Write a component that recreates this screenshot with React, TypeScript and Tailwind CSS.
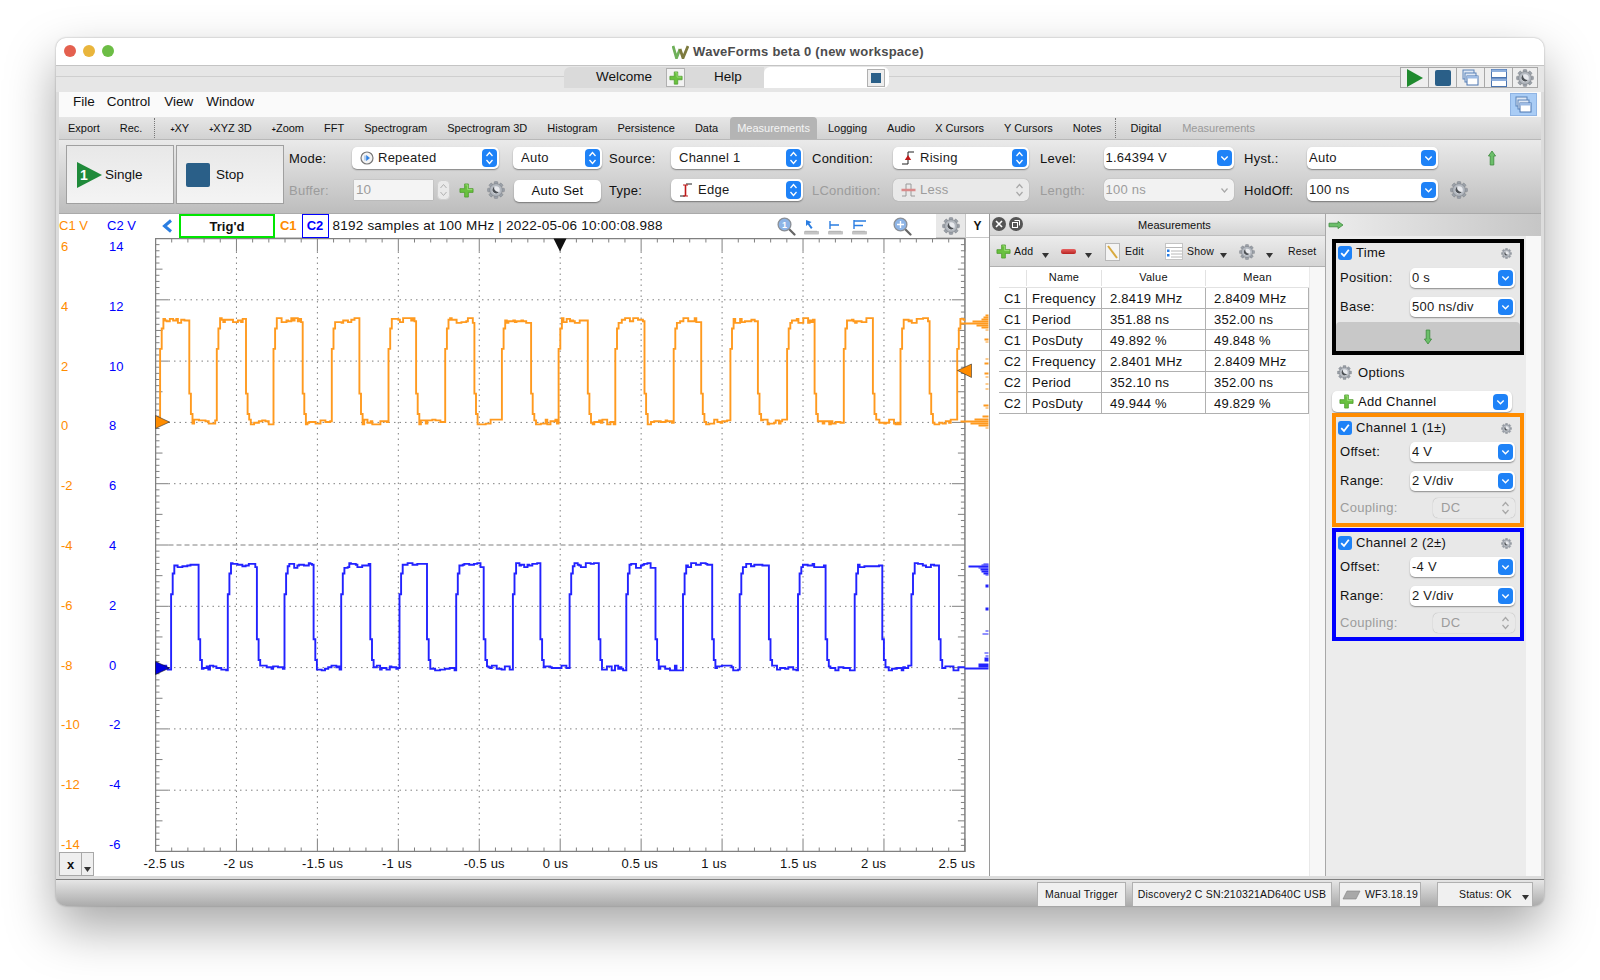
import type { ReactNode } from 'react'

const DIV_W = 80.94
const DIV_H = 61.3
const PLOT_W = 809.4
const PLOT_H = 613

function buildTrace(seed: number, firstEdge: number, hi: number, lo: number, startX: number) {
  let s = seed
  const rnd = () => {
    s = (s * 1664525 + 1013904223) % 4294967296
    return s / 4294967296
  }
  const period = 56.95
  const step = 1.62
  let y = lo
  let noise = 0
  let hold = 0
  let d = `M${startX} ${lo}`
  for (let x = startX; x < PLOT_W - 1; x += step) {
    const phase = ((x - firstEdge) % period + period) % period
    const target = x >= firstEdge - 28.4 && phase < period / 2 ? hi : lo
    y += (target - y) * 0.72
    if (hold <= 0) {
      noise = Math.round((rnd() - 0.5) * 7) * 0.8
      hold = Math.floor(rnd() * 3) + 1
    }
    hold--
    const settled = Math.abs(target - y) < 3
    const py = settled ? target + noise : y
    d += `H${(x + step).toFixed(1)}V${py.toFixed(1)}`
  }
  return d
}

const orangeTrace = buildTrace(17, 2.5, 82, 183.5, 3)
const blueTrace = buildTrace(91, 13, 327, 429.5, 1)

const orangeHist: [number, number, number][] = [
  [314, 3, 2], [316, 5, 2], [318, 7, 2], [320, 16, 2], [322, 28, 2], [324, 12, 2], [326, 7, 2], [329, 3, 1],
  [338, 4, 2], [341, 3, 1], [358, 3, 1], [362, 4, 2], [372, 4, 2], [376, 3, 1], [383, 3, 1], [388, 3, 1],
  [404, 5, 2], [407, 3, 1], [415, 6, 2], [418, 14, 2], [420, 28, 2], [422, 18, 2], [424, 10, 2], [427, 3, 1],
]
const blueHist: [number, number, number][] = [
  [563, 5, 1], [564, 7, 1], [565, 20, 2], [567, 10, 1], [568, 8, 2], [570, 7, 2], [572, 5, 2], [574, 3, 1],
  [584, 3, 3], [607, 3, 3], [630, 3, 1], [633, 6, 1], [652, 4, 1], [655, 3, 1], [657, 4, 4], [663, 10, 4], [667, 24, 2],
]

function Plot() {
  const vTicks: ReactNode[] = []
  for (let i = 0; i <= 50; i++) {
    const x = (i * DIV_W) / 5
    const len = i % 5 === 0 ? 13 : 4
    vTicks.push(<line key={`t${i}`} x1={x} x2={x} y1={0} y2={len} />)
    vTicks.push(<line key={`b${i}`} x1={x} x2={x} y1={PLOT_H} y2={PLOT_H - len} />)
  }
  const hTicks: ReactNode[] = []
  for (let i = 0; i <= 100; i++) {
    const y = (i * DIV_H) / 10
    const len = i % 10 === 0 ? 13 : i % 5 === 0 ? 7 : 4
    hTicks.push(<line key={`l${i}`} y1={y} y2={y} x1={0} x2={len} />)
    hTicks.push(<line key={`r${i}`} y1={y} y2={y} x1={PLOT_W} x2={PLOT_W - len} />)
  }
  return (
    <svg width="834" height="614" viewBox="-0.5 -0.5 834 614" className="block shrink-0">
      <g stroke="#808080" strokeWidth="1" fill="none">
        {Array.from({ length: 9 }, (_, i) => (
          <line key={i} x1={(i + 1) * DIV_W} x2={(i + 1) * DIV_W} y1={13} y2={PLOT_H - 13} strokeDasharray="1.5 4" />
        ))}
        {Array.from({ length: 9 }, (_, i) => (
          <line key={i} y1={(i + 1) * DIV_H} y2={(i + 1) * DIV_H} x1={13} x2={PLOT_W - 13} strokeDasharray={i === 4 ? '5 3' : '1.5 4'} />
        ))}
        {vTicks}
        {hTicks}
        <rect x="0" y="0" width={PLOT_W} height={PLOT_H} strokeWidth="1.5" />
      </g>
      <path d={orangeTrace} fill="none" stroke="#ff9a1f" strokeWidth="1.9" />
      <path d={blueTrace} fill="none" stroke="#2222ff" strokeWidth="1.9" />
      {orangeHist.map(([y, w, h]) => (
        <rect key={y} x={833 - w} y={y - 238} width={w} height={h} fill="#ff9a1f" />
      ))}
      {blueHist.map(([y, w, h]) => (
        <rect key={y} x={833 - w} y={y - 238} width={w} height={h} fill="#2222ff" />
      ))}
      <polygon points="0,177 14,183.5 0,190" fill="#ff8c00" stroke="#333" strokeWidth="0.6" />
      <polygon points="0,423 14,429.5 0,436" fill="#0000e0" stroke="#111" strokeWidth="0.6" />
      <polygon points="802,132 816,125.5 816,139" fill="#ff8c00" stroke="#333" strokeWidth="0.6" />
      <polygon points="398,0 411,0 404.5,13" fill="#111" />
    </svg>
  )
}

function Gear({ size = 16 }: { size?: number }) {
  return (
    <svg width={size} height={size} viewBox="0 0 20 20" className="shrink-0">
      <g fill="#9aa0a8" stroke="#6f747b" strokeWidth="0.4">
        {[0, 45, 90, 135, 180, 225, 270, 315].map(a => (
          <rect key={a} x="8" y="0.6" width="4" height="5" rx="0.8" transform={`rotate(${a} 10 10)`} />
        ))}
      </g>
      <circle cx="10" cy="10" r="7" fill="#b4b9c0" stroke="#7c8188" strokeWidth="0.7" />
      <circle cx="10" cy="10" r="4.2" fill="#e8eaee" />
      <path d="M8 6.4a4 4 0 1 0 5.4 5.6a4.6 4.6 0 0 1-5.4-5.6z" fill="#4d5156" />
    </svg>
  )
}

function Plus({ size = 15 }: { size?: number }) {
  return (
    <svg width={size} height={size} viewBox="0 0 16 16" className="shrink-0">
      <path d="M6 1h4v5h5v4h-5v5H6v-5H1V6h5z" fill="#69c13f" stroke="#4a9a2a" strokeWidth="0.8" strokeLinejoin="round" />
      <path d="M6.8 2h2.4v5h5" fill="none" stroke="#a5e584" strokeWidth="0.8" />
    </svg>
  )
}

function Arrow({ dir }: { dir: 'up' | 'down' | 'right' }) {
  const rot = dir === 'up' ? 0 : dir === 'down' ? 180 : 90
  return (
    <svg width="16" height="16" viewBox="0 0 16 16" className="shrink-0">
      <path
        d="M8 1l3.6 5H9.8v9H6.2V6H4.4z"
        transform={`rotate(${rot} 8 8)`}
        fill="#6cbf6a"
        stroke="#3c8a3c"
        strokeWidth="0.8"
        strokeLinejoin="round"
      />
    </svg>
  )
}

function DropTri() {
  return (
    <svg width="7" height="5" viewBox="0 0 7 5" className="shrink-0">
      <polygon points="0,0 7,0 3.5,5" fill="#333" />
    </svg>
  )
}

function WaveIcon({ kind, muted }: { kind: 'edge' | 'rising' | 'less'; muted?: boolean }) {
  const dark = muted ? '#9a9a9a' : '#222'
  const red = muted ? '#d98a8a' : '#c01818'
  return (
    <svg width="15" height="16" viewBox="0 0 15 16" className="shrink-0">
      {kind === 'edge' && (
        <>
          <path d="M1 14h5M7 2h6" stroke={dark} strokeWidth="1" fill="none" />
          <path d="M6.5 3v11" stroke={red} strokeWidth="1.6" />
          <path d="M4 3h5M4 14h5" stroke={red} strokeWidth="1" />
        </>
      )}
      {kind === 'rising' && (
        <>
          <path d="M1 14h6V2h6" stroke={dark} strokeWidth="1" fill="none" />
          <polygon points="7,5 3.8,10 10.2,10" fill={red} />
        </>
      )}
      {kind === 'less' && (
        <>
          <path d="M1 14h4V2h5v12h4" stroke={dark} strokeWidth="1" fill="none" />
          <path d="M0.5 8h14" stroke={red} strokeWidth="2.4" />
        </>
      )}
    </svg>
  )
}

function Field({
  w,
  arrows = 'updown',
  disabled,
  icon,
  children,
}: {
  w: string
  arrows?: 'updown' | 'down'
  disabled?: boolean
  icon?: ReactNode
  children: ReactNode
}) {
  const disabledBg = arrows === 'down' ? 'bg-[#f2f2f2]' : 'bg-[#e9e9e9]'
  return (
    <div
      className={`${w} h-full flex items-center rounded-[5px] pr-[2px] text-[13px] tracking-[0.25px] ${arrows === 'down' ? 'pl-[2px]' : 'pl-[8px]'} ${
        disabled
          ? `${disabledBg} text-[#9c9c9c] shadow-[0_0_1px_rgba(0,0,0,0.35)]`
          : 'bg-white text-[#1a1a1a] shadow-[0_1px_1.5px_rgba(0,0,0,0.4)]'
      }`}
    >
      {icon && <span className="mr-[4px] flex shrink-0">{icon}</span>}
      <span className="flex-1 truncate">{children}</span>
      {disabled ? (
        <svg width="15" height="18" viewBox="0 0 15 18" className="shrink-0">
          {arrows === 'updown' ? (
            <path d="M4.5 7L7.5 3.5L10.5 7M4.5 11L7.5 14.5L10.5 11" fill="none" stroke="#a8a8a8" strokeWidth="1.2" />
          ) : (
            <path d="M4.5 7.5L7.5 11L10.5 7.5" fill="none" stroke="#a8a8a8" strokeWidth="1.2" />
          )}
        </svg>
      ) : arrows === 'updown' ? (
        <span className="flex h-[18px] w-[15px] shrink-0 items-center justify-center rounded-[4px] bg-[#1e82f7]">
          <svg width="15" height="18" viewBox="0 0 15 18">
            <path d="M4.5 7L7.5 3.5L10.5 7M4.5 11L7.5 14.5L10.5 11" fill="none" stroke="#fff" strokeWidth="1.3" />
          </svg>
        </span>
      ) : (
        <span className="flex h-[16px] w-[15px] shrink-0 items-center justify-center rounded-[4px] bg-[#1e82f7]">
          <svg width="15" height="16" viewBox="0 0 15 16">
            <path d="M4.3 6.5L7.5 9.7L10.7 6.5" fill="none" stroke="#fff" strokeWidth="1.4" />
          </svg>
        </span>
      )}
    </div>
  )
}

function Label({ children, muted }: { children: ReactNode; muted?: boolean }) {
  return (
    <div className={`flex h-full items-center pt-px text-[13px] tracking-[0.25px] ${muted ? 'text-[#9c9c9c]' : 'text-[#111]'}`}>
      {children}
    </div>
  )
}

function Check({ label }: { label: string }) {
  return (
    <div className="flex h-[14px] items-center pl-[2px] pr-[8px]">
      <span className="flex h-[14px] w-[14px] items-center justify-center rounded-[3px] bg-[#1e82f7]">
        <svg width="12" height="12" viewBox="0 0 12 12">
          <path d="M2.2 6.2L5 9L9.8 2.8" fill="none" stroke="#fff" strokeWidth="1.8" />
        </svg>
      </span>
      <span className="ml-[4px] flex-1 text-[13px] tracking-[0.3px] text-[#111]">{label}</span>
      <Gear size={11} />
    </div>
  )
}

function SideRow({ label, value }: { label: string; value: string }) {
  return (
    <div className="flex h-[20px] items-center pl-[4px]">
      <span className="w-[70px] text-[13px] tracking-[0.3px] text-[#111]">{label}</span>
      <Field w="w-[105px]" arrows="down">
        {value}
      </Field>
    </div>
  )
}

function ChannelBox({ border, name, offset, className }: { border: string; name: string; offset: string; className: string }) {
  return (
    <div className={`ml-[6px] w-[192px] border-4 ${border} bg-[#e8e8e8] pt-[4px] ${className}`}>
      <Check label={name} />
      <div className="mt-[7px]">
        <SideRow label="Offset:" value={offset} />
      </div>
      <div className="mt-[9px]">
        <SideRow label="Range:" value="2 V/div" />
      </div>
      <div className="mt-[7px] flex h-[20px] items-center pl-[4px]">
        <span className="w-[93px] text-[13px] tracking-[0.3px] text-[#9c9c9c]">Coupling:</span>
        <Field w="w-[82px]" disabled>
          DC
        </Field>
      </div>
    </div>
  )
}

function MeasureIcon({ kind }: { kind: 'arrow' | 'one' | 'two' }) {
  return (
    <svg width="17" height="17" viewBox="0 0 17 17" className="shrink-0">
      {kind === 'arrow' && <path d="M3 2v6l1.8-1.6L8 11l1.6-1.2L6.4 5.4L8.6 4z" fill="#2a7de1" />}
      {kind === 'one' && <path d="M3 3v8M3 7h9" stroke="#2a7de1" strokeWidth="1.4" fill="none" />}
      {kind === 'two' && <path d="M3 2v9M3 3h12M3 7.5h9" stroke="#2a7de1" strokeWidth="1.4" fill="none" />}
      <rect x="1" y="13" width="15" height="3.5" rx="0.8" fill="#c4c4c4" />
      <path d="M3 12.5v1.5M5 12.5v1.5M7 12.5v1.5M9 12.5v1.5M11 12.5v1.5M13 12.5v1.5" stroke="#999" strokeWidth="0.6" />
    </svg>
  )
}

function Magnifier({ center }: { center: ReactNode }) {
  return (
    <svg width="19" height="19" viewBox="0 0 19 19" className="shrink-0">
      <path d="M11.5 11.5L17.5 17.5" stroke="#666" strokeWidth="2.2" strokeLinecap="round" />
      <circle cx="7.5" cy="7.5" r="6.4" fill="#8db4e6" stroke="#8a8f96" strokeWidth="1.3" />
      {center}
    </svg>
  )
}

function WindowsIcon() {
  return (
    <svg width="17" height="17" viewBox="0 0 17 17">
      <rect x="1" y="1" width="11" height="9" fill="#dfe8f5" stroke="#5a82b8" />
      <rect x="3" y="4" width="11" height="9" fill="#dfe8f5" stroke="#5a82b8" />
      <rect x="5" y="7" width="11" height="9" fill="#fff" stroke="#4a74b0" />
      <rect x="5" y="7" width="11" height="2.5" fill="#9dbbe4" />
    </svg>
  )
}

const tabs = ['FFT', 'Spectrogram', 'Spectrogram 3D', 'Histogram', 'Persistence', 'Data']
const plusTabs = ['XY', 'XYZ 3D', 'Zoom']
const tabsAfter = ['Logging', 'Audio', 'X Cursors', 'Y Cursors', 'Notes']

const rows = [
  ['C1', 'Frequency', '2.8419 MHz', '2.8409 MHz'],
  ['C1', 'Period', '351.88 ns', '352.00 ns'],
  ['C1', 'PosDuty', '49.892 %', '49.848 %'],
  ['C2', 'Frequency', '2.8401 MHz', '2.8409 MHz'],
  ['C2', 'Period', '352.10 ns', '352.00 ns'],
  ['C2', 'PosDuty', '49.944 %', '49.829 %'],
]

const yOrange = ['6', '4', '2', '0', '-2', '-4', '-6', '-8', '-10', '-12', '-14']
const yBlue = ['14', '12', '10', '8', '6', '4', '2', '0', '-2', '-4', '-6']
const xLabels: [string, string][] = [
  ['-2.5 us', ''],
  ['-2 us', 'mr-[10px]'],
  ['-1.5 us', ''],
  ['-1 us', 'mr-[10px]'],
  ['-0.5 us', 'ml-[6px]'],
  ['0 us', 'mr-[10px]'],
  ['0.5 us', ''],
  ['1 us', 'mr-[10px]'],
  ['1.5 us', ''],
  ['2 us', 'mr-[8px]'],
  ['2.5 us', ''],
]

export default function App() {
  return (
    <div className="h-[980px] overflow-hidden bg-white pt-[38px] pl-[56px] font-['Liberation_Sans',Arial,sans-serif]">
      <div className="flex h-[868px] w-[1488px] flex-col overflow-hidden rounded-[10px] bg-[#dcdcdc] shadow-[0_22px_50px_rgba(0,0,0,0.35),0_0_2px_rgba(0,0,0,0.35)]">
        {/* Title bar */}
        <div className="relative flex h-[28px] shrink-0 items-center justify-center border-b border-[#c4c4c4] bg-white pr-[4px]">
          <div className="absolute left-[8px] top-[7px] flex gap-[7px]">
            <span className="h-[12px] w-[12px] rounded-full bg-[#e4604f]" />
            <span className="h-[12px] w-[12px] rounded-full bg-[#e9b53c]" />
            <span className="h-[12px] w-[12px] rounded-full bg-[#6cbd45]" />
          </div>
          <svg width="17" height="14" viewBox="0 0 17 14" className="mr-[4px] shrink-0">
            <path d="M1 1l3.5 12L8 4" fill="none" stroke="#6fb05a" strokeWidth="2.8" />
            <path d="M8 4l3 9L16 1" fill="none" stroke="#7d7a3e" strokeWidth="2.8" />
          </svg>
          <span className="text-[13px] font-bold tracking-[0.25px] text-[#4c4c4c]">WaveForms beta 0 (new workspace)</span>
        </div>

        {/* Workspace tabs */}
        <div className="flex h-[26px] shrink-0 bg-[#e6e6e6]">
          <div className="w-[508px] pt-[10px]">
            <div className="border-t border-[#cfcfcf]" />
          </div>
          <div className="mt-px flex h-[21px] w-[200px] items-center rounded-tl-[6px] bg-[#dadada] text-[13.5px] text-[#111]">
            <span className="ml-[32px]">Welcome</span>
            <span className="ml-[14px] flex h-[19px] w-[19px] items-center justify-center border border-[#b0b0b0] bg-[#f2f2f2]">
              <Plus size={14} />
            </span>
            <span className="ml-[29px]">Help</span>
          </div>
          <div className="mt-px flex h-[21px] w-[125px] items-center justify-end rounded-r-[6px] rounded-tl-[6px] bg-white pr-[4px]">
            <span className="flex h-[18px] w-[18px] items-center justify-center border border-[#b0b0b0] bg-[#eeeeee]">
              <span className="h-[10px] w-[10px] bg-[#2a5f88]" />
            </span>
          </div>
          <div className="flex-1 pt-[10px]">
            <div className="border-t border-[#cfcfcf]" />
          </div>
          <div className="mr-[6px] mt-px flex h-[21px] border border-[#a8a8a8] bg-[#eeeeee]">
            <span className="flex w-[28px] items-center justify-center border-r border-[#a8a8a8]">
              <svg width="18" height="18" viewBox="0 0 18 18">
                <polygon points="1,0 17,9 1,18" fill="#1f8a2e" />
              </svg>
            </span>
            <span className="flex w-[28px] items-center justify-center border-r border-[#a8a8a8]">
              <span className="h-[16px] w-[16px] rounded-[2px] bg-[#2a5f88]" />
            </span>
            <span className="flex w-[28px] items-center justify-center border-r border-[#a8a8a8]">
              <WindowsIcon />
            </span>
            <span className="flex w-[28px] items-center justify-center border-r border-[#a8a8a8]">
              <svg width="16" height="18" viewBox="0 0 16 18">
                <rect x="0.5" y="0.5" width="15" height="8" fill="#fff" stroke="#4a74b0" />
                <rect x="0.5" y="9.5" width="15" height="8" fill="#fff" stroke="#4a74b0" />
                <rect x="0.5" y="0.5" width="15" height="2.5" fill="#8fb0de" />
                <rect x="0.5" y="9.5" width="15" height="2.5" fill="#8fb0de" />
              </svg>
            </span>
            <span className="flex w-[24px] items-center justify-center">
              <Gear size={18} />
            </span>
          </div>
        </div>

        <div className="flex min-h-0 flex-1 flex-col px-[3px]">
          {/* Menu */}
          <div className="flex h-[25px] shrink-0 items-center bg-[#fafafa] pl-[14px] text-[13.5px] text-[#111]">
            <span className="mb-[4px] flex">
              <span>File</span>
              <span className="ml-[12px]">Control</span>
              <span className="ml-[14px]">View</span>
              <span className="ml-[13px]">Window</span>
            </span>
            <span className="ml-auto mr-[4px] flex h-[23px] w-[27px] items-center justify-center border border-[#8fb4e4] bg-[#a9ccf5]">
              <WindowsIcon />
            </span>
          </div>

          {/* Instrument tabs */}
          <div className="flex h-[23px] shrink-0 items-center border-b border-[#b8b8b8] bg-gradient-to-b from-[#e6e6e6] to-[#d2d2d2] text-[11px] text-[#111]">
            <span className="ml-[9px]">Export</span>
            <span className="ml-[20px]">Rec.</span>
            <span className="ml-[12px] h-[20px] border-l border-dotted border-[#777]" />
            <span className="ml-[5px] flex items-center">
              {plusTabs.map(t => (
                <span key={t} className="px-[10px]">
                  <span className="text-[7px] font-bold">+</span>
                  {t}
                </span>
              ))}
              {tabs.map(t => (
                <span key={t} className="px-[10px]">
                  {t}
                </span>
              ))}
            </span>
            <span className="ml-[2px] flex h-full items-center rounded-t-[4px] bg-[#b4b4b4] px-[7px] text-[#f4f4f4]">Measurements</span>
            <span className="ml-px flex">
              {tabsAfter.map(t => (
                <span key={t} className="px-[10px]">
                  {t}
                </span>
              ))}
            </span>
            <span className="ml-[3px] h-[20px] border-l border-dotted border-[#777]" />
            <span className="ml-[15px]">Digital</span>
            <span className="ml-[21px] text-[#9a9a9a]">Measurements</span>
          </div>

          {/* Trigger toolbar */}
          <div className="flex h-[74px] shrink-0 items-start border-b border-[#aaaaaa] bg-gradient-to-b from-[#eaeaea] to-[#bdbdbd] pl-[7px]">
            <div className="mt-[5px] flex h-[59px] w-[108px] items-center border border-[#a0a0a0] bg-gradient-to-b from-[#e8e8e8] to-[#f4f4f4] pl-[9px] pt-px text-[13.5px] text-[#111]">
              <svg width="27" height="26" viewBox="0 0 27 26" className="shrink-0">
                <polygon points="1,0 26,13 1,26" fill="#1f8a3a" />
                <text x="4" y="18" fontSize="14" fontWeight="700" fill="#fff" fontFamily="Liberation Sans">
                  1
                </text>
              </svg>
              <span className="ml-[2px]">Single</span>
            </div>
            <div className="ml-[2px] mt-[5px] flex h-[59px] w-[108px] items-center border border-[#a0a0a0] bg-gradient-to-b from-[#e8e8e8] to-[#f4f4f4] pl-[9px] pt-px text-[13.5px] text-[#111]">
              <span className="h-[24px] w-[24px] rounded-[2px] bg-[#2a5f88]" />
              <span className="ml-[6px]">Stop</span>
            </div>
            <div className="ml-[5px] mt-[7px] grid grid-cols-[63px_161px_96px_62px_141px_81px_147px_63.5px_140.5px_63px_131px_auto] grid-rows-[22px_22px] gap-y-[10px]">
              <Label>Mode:</Label>
              <Field
                w="w-[147px]"
                icon={
                  <svg width="14" height="14" viewBox="0 0 14 14">
                    <circle cx="7" cy="7" r="6" fill="#f4f4f4" stroke="#777" strokeWidth="1.2" />
                    <path d="M5 4.5v5M6.5 4.5l3 2.5l-3 2.5z" fill="#2a7de1" stroke="#2a7de1" strokeWidth="0.6" />
                  </svg>
                }
              >
                Repeated
              </Field>
              <Field w="w-[89px]">Auto</Field>
              <Label>Source:</Label>
              <Field w="w-[132px]">Channel 1</Field>
              <Label>Condition:</Label>
              <Field w="w-[136px]" icon={<WaveIcon kind="rising" />}>
                Rising
              </Field>
              <Label>Level:</Label>
              <Field w="w-[130px]" arrows="down">
                1.64394 V
              </Field>
              <Label>Hyst.:</Label>
              <Field w="w-[131px]" arrows="down">
                Auto
              </Field>
              <div className="ml-[46px] flex h-full items-center">
                <Arrow dir="up" />
              </div>

              <Label muted>Buffer:</Label>
              <div className="flex h-full items-center pl-[2px]">
                <span className="flex h-[20px] w-[79px] items-center bg-[#f4f4f4] pl-[2px] text-[13.5px] text-[#9c9c9c] shadow-[0_0_1px_rgba(0,0,0,0.3)]">
                  10
                </span>
                <svg width="13" height="20" viewBox="0 0 13 20" className="ml-[4px] shrink-0">
                  <rect x="0.5" y="0.5" width="12" height="19" rx="4" fill="#e9e9e9" stroke="#cfcfcf" />
                  <path d="M3.5 8L6.5 4.5L9.5 8M3.5 12L6.5 15.5L9.5 12" fill="none" stroke="#b0b0b0" />
                </svg>
                <span className="ml-[9px] flex">
                  <Plus size={15} />
                </span>
                <span className="ml-[13px] flex">
                  <Gear size={18} />
                </span>
              </div>
              <div className="ml-px flex h-full w-[87px] translate-y-px items-center justify-center rounded-[5px] bg-white text-[13px] tracking-[0.25px] text-[#111] shadow-[0_1px_1.5px_rgba(0,0,0,0.4)]">
                Auto Set
              </div>
              <Label>Type:</Label>
              <Field w="w-[132px]" icon={<WaveIcon kind="edge" />}>
                Edge
              </Field>
              <Label muted>LCondition:</Label>
              <Field w="w-[136px]" disabled icon={<WaveIcon kind="less" muted />}>
                Less
              </Field>
              <Label muted>Length:</Label>
              <Field w="w-[130px]" arrows="down" disabled>
                100 ns
              </Field>
              <Label>HoldOff:</Label>
              <Field w="w-[131px]" arrows="down">
                100 ns
              </Field>
              <div className="ml-[12px] flex h-full items-center">
                <Gear size={18} />
              </div>
            </div>
          </div>

          {/* Main area */}
          <div className="flex h-[662px] shrink-0">
            {/* Scope pane */}
            <div className="flex w-[931px] shrink-0 flex-col border-r border-[#9a9a9a] bg-white">
              <div className="flex h-[24px] shrink-0 items-center text-[13px]">
                <span className="w-[48px] text-[#ff8c00]">C1 V</span>
                <span className="w-[55px] text-[#0000ff]">C2 V</span>
                <span className="flex w-[17px]">
                  <svg width="11" height="14" viewBox="0 0 11 14">
                    <path d="M9 1.5L2.5 7L9 12.5" fill="none" stroke="#2a7de1" strokeWidth="3" />
                  </svg>
                </span>
                <span className="flex h-full w-[96px] items-center justify-center border-2 border-[#00e600] pt-px font-bold text-[#111]">
                  Trig'd
                </span>
                <span className="flex h-full w-[26.5px] items-center justify-center border-b border-[#c8c8c8] font-bold text-[#ff8c00]">C1</span>
                <span className="flex h-full w-[27px] items-center justify-center border border-[#0000ff] font-bold text-[#0000ff]">C2</span>
                <span className="ml-[4px] whitespace-nowrap pt-px text-[13.5px] tracking-[0.22px] text-[#111]">8192 samples at 100 MHz | 2022-05-06 10:00:08.988</span>
                <span className="ml-auto flex items-center">
                  <Magnifier center={<text x="5" y="11" fontSize="9" fontWeight="700" fill="#fff" fontFamily="Liberation Sans">1</text>} />
                  <span className="ml-[7px] flex">
                    <MeasureIcon kind="arrow" />
                  </span>
                  <span className="ml-[7px] flex">
                    <MeasureIcon kind="one" />
                  </span>
                  <span className="ml-[7px] flex">
                    <MeasureIcon kind="two" />
                  </span>
                  <span className="ml-[25px] flex">
                    <Magnifier center={<path d="M4 7.5h7M7.5 4v7" stroke="#fff" strokeWidth="1.4" />} />
                  </span>
                  <span className="ml-[24px] flex h-[24px] w-[29px] items-center justify-center border-b border-[#c8c8c8] bg-[#e8e8e8]">
                    <Gear size={18} />
                  </span>
                  <span className="flex h-[24px] w-[24px] items-center justify-center border-b border-l border-[#c8c8c8] text-[12px] font-bold text-[#111]">
                    Y
                  </span>
                </span>
              </div>

              <div className="flex h-[614px] shrink-0">
                <div className="flex h-full w-[48px] shrink-0 translate-y-px flex-col justify-between pl-[2px] text-[13px] text-[#ff8c00]">
                  {yOrange.map(v => (
                    <span key={v} className="h-[16px] leading-[16px]">
                      {v}
                    </span>
                  ))}
                </div>
                <div className="flex h-full w-[48px] shrink-0 translate-y-px flex-col justify-between pl-[2px] text-[13px] text-[#0000ff]">
                  {yBlue.map(v => (
                    <span key={v} className="h-[16px] leading-[16px]">
                      {v}
                    </span>
                  ))}
                </div>
                <Plot />
              </div>

              <div className="flex h-[24px] shrink-0 items-center">
                <div className="flex h-[24px] w-[35px] shrink-0 border border-[#a8a8a8] bg-[#efefef]">
                  <span className="flex w-[22px] items-center justify-center border-r border-[#a8a8a8] text-[13px] font-bold leading-none text-[#111]">x</span>
                  <span className="flex flex-1 items-end justify-center pb-[3px]">
                    <DropTri />
                  </span>
                </div>
                <div className="ml-[30.5px] grid w-[872px] shrink-0 grid-cols-11 text-center text-[13px] text-[#111]">
                  {xLabels.map(([l, shift]) => (
                    <span key={l} className={`whitespace-nowrap tracking-[0.2px] ${shift}`}>
                      {l}
                    </span>
                  ))}
                </div>
              </div>
            </div>

            {/* Measurements pane */}
            <div className="flex w-[336px] shrink-0 flex-col border-r border-[#a8a8a8] bg-white">
              <div className="relative flex h-[22px] shrink-0 items-center justify-center border-b border-[#bdbdbd] bg-gradient-to-b from-[#ececec] to-[#d4d4d4] pl-[34px] pt-px text-[11px] text-[#111]">
                <span className="absolute left-[2px] top-[3px] flex gap-[3px]">
                  <span className="flex h-[14px] w-[14px] items-center justify-center rounded-full bg-[#555]">
                    <svg width="8" height="8" viewBox="0 0 8 8">
                      <path d="M1 1l6 6M7 1l-6 6" stroke="#fff" strokeWidth="1.6" />
                    </svg>
                  </span>
                  <span className="flex h-[14px] w-[14px] items-center justify-center rounded-full bg-[#555]">
                    <svg width="8" height="8" viewBox="0 0 8 8">
                      <rect x="0.5" y="2.5" width="5" height="5" fill="none" stroke="#fff" />
                      <path d="M2.5 .5h5v5" fill="none" stroke="#fff" />
                    </svg>
                  </span>
                </span>
                Measurements
              </div>
              <div className="flex h-[31px] shrink-0 items-center border-b border-[#b0b0b0] bg-gradient-to-b from-[#ececec] to-[#d4d4d4] pt-px text-[10.5px] tracking-[0.2px] text-[#111]">
                <span className="ml-[6px] flex">
                  <Plus size={15} />
                </span>
                <span className="ml-[3px] w-[20px]">Add</span>
                <span className="ml-[8px] mt-[8px] flex">
                  <DropTri />
                </span>
                <span className="ml-[12px] h-[5px] w-[15px] rounded-[2px] bg-gradient-to-b from-[#e86060] to-[#b82020]" />
                <span className="ml-[9px] mt-[8px] flex">
                  <DropTri />
                </span>
                <svg width="15" height="18" viewBox="0 0 15 18" className="ml-[13px] shrink-0">
                  <rect x="0.5" y="0.5" width="14" height="17" fill="#f4f4f4" stroke="#b8b8b8" />
                  <path d="M3 3l9 12" stroke="#d8a93e" strokeWidth="2" />
                </svg>
                <span className="ml-[5px] w-[19px]">Edit</span>
                <svg width="18" height="17" viewBox="0 0 18 17" className="ml-[21px] shrink-0">
                  <rect x="0.5" y="0.5" width="17" height="16" fill="#fff" stroke="#c4c4c4" />
                  <path d="M0.5 4.5h17M6 8h11M6 11h11M6 14h11" stroke="#b8b8b8" />
                  <rect x="2" y="6.5" width="2.5" height="2.5" fill="#2a7de1" />
                  <rect x="2" y="11" width="2.5" height="2.5" fill="#2a7de1" />
                </svg>
                <span className="ml-[4px] w-[27px]">Show</span>
                <span className="ml-[6px] mt-[8px] flex">
                  <DropTri />
                </span>
                <span className="ml-[12px] flex">
                  <Gear size={16} />
                </span>
                <span className="ml-[11px] mt-[8px] flex">
                  <DropTri />
                </span>
                <span className="ml-[15px]">Reset</span>
              </div>
              <div className="flex min-h-0 flex-1">
                <div className="w-[319px] shrink-0 pl-[9px] text-[13px] tracking-[0.25px] text-[#111]">
                  <div className="flex h-[21px] items-center border-b border-[#e2e2e2] pt-px text-[11px]">
                    <span className="h-[16px] w-[28px] border-r border-[#e2e2e2]" />
                    <span className="flex h-[16px] w-[75px] items-center justify-center border-r border-[#e2e2e2]">Name</span>
                    <span className="flex h-[16px] w-[104px] items-center justify-center border-r border-[#e2e2e2]">Value</span>
                    <span className="flex h-[16px] w-[103px] items-center justify-center">Mean</span>
                  </div>
                  {rows.map((r, i) => (
                    <div key={i} className="flex h-[21px] items-center border-b border-[#b0b0b0]">
                      <span className="flex h-full w-[28px] items-center justify-center border-r border-[#b0b0b0] pt-px">{r[0]}</span>
                      <span className="flex h-full w-[75px] items-center border-r border-[#b0b0b0] pl-[5px] pt-px">{r[1]}</span>
                      <span className="flex h-full w-[104px] items-center border-r border-[#b0b0b0] pl-[8px] pt-px">{r[2]}</span>
                      <span className="flex h-full w-[103px] items-center border-r border-[#b0b0b0] pl-[8px] pt-px">{r[3]}</span>
                    </div>
                  ))}
                </div>
                <div className="flex-1 border-l border-[#eaeaea] bg-[#f7f7f7]" />
              </div>
            </div>

            {/* Settings pane */}
            <div className="flex min-w-0 flex-1 flex-col bg-[#f8f8f8]">
              <div className="flex h-[22px] shrink-0 items-center bg-gradient-to-r from-[#ececec] to-[#c6c6c6] pl-[2px]">
                <Arrow dir="right" />
              </div>
              <div className="flex w-[200px] flex-1 flex-col bg-[#ececec] pt-[3px]">
                <div className="ml-[6px] w-[192px] border-4 border-black bg-[#e8e8e8] pt-[3px]">
                  <Check label="Time" />
                  <div className="mt-[8px]">
                    <SideRow label="Position:" value="0 s" />
                  </div>
                  <div className="mt-[9px]">
                    <SideRow label="Base:" value="500 ns/div" />
                  </div>
                  <div className="mt-[5px] flex h-[29px] items-center justify-center rounded-t-[4px] bg-[#c8c8c8]">
                    <Arrow dir="down" />
                  </div>
                </div>
                <div className="ml-[11px] mt-[7px] flex h-[20px] items-center pt-px text-[13px] tracking-[0.3px] text-[#111]">
                  <Gear size={15} />
                  <span className="ml-[6px]">Options</span>
                </div>
                <div className="ml-[6px] mt-[9px] flex h-[21px] w-[180px] items-center rounded-[5px] bg-white pl-[7px] pr-[4px] text-[13px] tracking-[0.3px] text-[#111] shadow-[0_1px_1.5px_rgba(0,0,0,0.4)]">
                  <Plus size={15} />
                  <span className="ml-[4px] flex-1 pt-px">Add Channel</span>
                  <span className="flex h-[16px] w-[15px] items-center justify-center rounded-[4px] bg-[#1e82f7]">
                    <svg width="15" height="16" viewBox="0 0 15 16">
                      <path d="M4.3 6.5L7.5 9.7L10.7 6.5" fill="none" stroke="#fff" strokeWidth="1.4" />
                    </svg>
                  </span>
                </div>
                <ChannelBox border="border-[#ff8c00]" name="Channel 1 (1±)" offset="4 V" className="mt-[1px] pb-[5px]" />
                <ChannelBox border="border-[#0000ff]" name="Channel 2 (2±)" offset="-4 V" className="mt-[1px] pb-[4px]" />
              </div>
            </div>
          </div>
        </div>

        {/* Status bar */}
        <div className="mt-[3px] flex h-[27px] shrink-0 items-end justify-end border-t border-[#7f7f7f] bg-gradient-to-b from-[#e6e6e6] to-[#ababab] pr-[11px] text-[10.5px] tracking-[0.2px] text-[#111]">
          <span className="flex h-[24px] w-[89px] items-center justify-center border border-b-0 border-[#b0b0b0] bg-[#f0f0f0]">Manual Trigger</span>
          <span className="ml-[6px] flex h-[24px] w-[200px] items-center justify-center whitespace-nowrap border border-b-0 border-[#b0b0b0] bg-[#f0f0f0]">
            Discovery2 C SN:210321AD640C USB
          </span>
          <span className="ml-[7px] flex h-[24px] w-[82px] items-center justify-center border border-b-0 border-[#b0b0b0] bg-[#f0f0f0]">
            <svg width="19" height="10" viewBox="0 0 19 10" className="mr-[4px] shrink-0">
              <path d="M5 1h13l-4 8H1z" fill="#a8a8a8" stroke="#808080" strokeWidth="0.6" />
            </svg>
            WF3.18.19
          </span>
          <span className="ml-[16px] flex h-[24px] w-[96px] items-center border border-b-0 border-[#b0b0b0] bg-[#f0f0f0] pl-[21px]">
            <span className="flex-1">Status: OK</span>
            <span className="mr-[3px] mt-[6px] flex">
              <DropTri />
            </span>
          </span>
        </div>
      </div>
    </div>
  )
}
